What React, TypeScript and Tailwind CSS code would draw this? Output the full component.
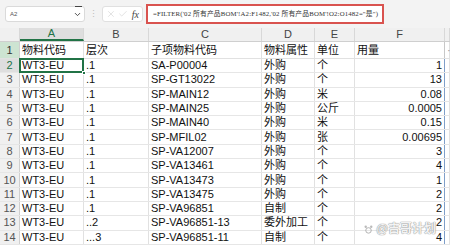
import { ChevronDown, X, Check } from 'lucide-react'

const cols = ['w-[20px]', 'w-[64px]', 'w-[65px]', 'w-[113px]', 'w-[53px]', 'w-[40px]', 'w-[90px]', 'w-[5px]']
const letters = ['', 'A', 'B', 'C', 'D', 'E', 'F', '']

const rows = [
  ['2', 'WT3-EU', '.1', 'SA-P00004', '外购', '个', '1'],
  ['3', 'WT3-EU', '.1', 'SP-GT13022', '外购', '个', '13'],
  ['4', 'WT3-EU', '.1', 'SP-MAIN12', '外购', '米', '0.08'],
  ['5', 'WT3-EU', '.1', 'SP-MAIN25', '外购', '公斤', '0.0005'],
  ['6', 'WT3-EU', '.1', 'SP-MAIN40', '外购', '米', '0.15'],
  ['7', 'WT3-EU', '.1', 'SP-MFIL02', '外购', '张', '0.00695'],
  ['8', 'WT3-EU', '.1', 'SP-VA12007', '外购', '个', '3'],
  ['9', 'WT3-EU', '.1', 'SP-VA13461', '外购', '个', '4'],
  ['10', 'WT3-EU', '.1', 'SP-VA13473', '外购', '个', '1'],
  ['11', 'WT3-EU', '.1', 'SP-VA13475', '外购', '个', '2'],
  ['12', 'WT3-EU', '.1', 'SP-VA96851', '自制', '个', '2'],
  ['13', 'WT3-EU', '..2', 'SP-VA96851-13', '委外加工', '个', '2'],
  ['14', 'WT3-EU', '...3', 'SP-VA96851-11', '自制', '个', '4'],
]

function Toolbar() {
  return (
    <div className="flex h-[28px] items-center bg-[#f3f3f3] pl-[5px]">
      <div className="relative flex h-[16px] w-[80px] items-center justify-between rounded-[3px] border border-[#dadada] bg-white pl-[4px] pr-[2px] text-[6px] text-[#555]">
        <span>A2</span>
        <ChevronDown size={9} strokeWidth={2.5} className="text-[#444]" />
        <div className="absolute right-[2px] top-[-1px] h-[1px] w-[7px] bg-[#444]" />
      </div>
      <span className="mx-[4px] text-[9px] leading-none text-[#bbb]">⋮</span>
      <div className="flex h-[16px] w-[41px] items-center gap-[2px] rounded-[3px] border border-[#e0e0e0] bg-white px-[3px] text-[#c4c4c4]">
        <X size={10} strokeWidth={1.2} />
        <Check size={10} strokeWidth={1.2} />
        <span className="ml-[2px] text-[10px] italic text-[#444] [font-family:'Liberation_Serif',serif]">fx</span>
      </div>
      <div className="ml-[3px] flex h-[20px] w-[238px] items-center overflow-hidden whitespace-nowrap border-2 border-[#d9534f] bg-white pl-[5px] text-[6.8px] tracking-[0.15px] text-[#333] [font-family:'Liberation_Serif','Noto_Sans_CJK_SC',serif]">
        =FILTER('02 所有产品BOM'!A2:F1482,'02 所有产品BOM'!O2:O1482="是")
      </div>
    </div>
  )
}

function HeaderRow() {
  return (
    <div className="flex h-[14px] border-b border-[#cfcfcf] bg-[#f0f0f0] text-[11px] text-[#444]">
      {letters.map((l, i) => (
        <div
          key={i}
          className={`${cols[i]} flex shrink-0 items-center justify-center border-r border-[#d8d8d8] leading-none ${
            i === 1 ? 'border-b-2 border-b-[#217346] bg-[#dedede] text-[#217346]' : ''
          }`}
        >
          {l}
        </div>
      ))}
    </div>
  )
}

function Cell({ w, children, right, extra = '' }: { w: string; children?: React.ReactNode; right?: boolean; extra?: string }) {
  return (
    <div
      className={`${w} flex shrink-0 items-center whitespace-nowrap border-r border-[#e1e1e1] px-[2px] leading-none ${
        right ? 'justify-end' : ''
      } ${extra}`}
    >
      {children}
    </div>
  )
}

export default function App() {
  return (
    <div className="relative h-[245px] w-[450px] overflow-hidden bg-white text-[11px] text-[#111] [font-family:'Liberation_Sans','Noto_Sans_CJK_SC',sans-serif]">
      <Toolbar />
      <HeaderRow />

      {/* row 1: field names */}
      <div className="flex h-[17px] border-b border-[#e1e1e1]">
        <div className="flex w-[20px] shrink-0 items-center justify-center border-r border-[#cfcfcf] bg-[#cde4d2] text-[#333]">1</div>
        <Cell w={cols[1]}>物料代码</Cell>
        <Cell w={cols[2]}>层次</Cell>
        <Cell w={cols[3]}>子项物料代码</Cell>
        <Cell w={cols[4]}>物料属性</Cell>
        <Cell w={cols[5]}>单位</Cell>
        <Cell w={cols[6]} extra="border-r-[#c8c8c8]">用量</Cell>
        <Cell w={cols[7]}>
          <span className="text-[#999]">·</span>
        </Cell>
      </div>

      {rows.map((r, idx) => (
        <div key={r[0]} className="flex h-[14.3px] border-b border-[#e6e6e6]">
          <div
            className={`flex w-[20px] shrink-0 items-center justify-center border-r border-[#cfcfcf] leading-none ${
              idx === 0 ? 'bg-[#dedede] text-[#217346]' : 'bg-[#f0f0f0] text-[#555]'
            }`}
          >
            {r[0]}
          </div>
          <Cell w={cols[1]} extra={idx === 0 ? 'relative' : ''}>
            {r[1]}
            {idx === 0 && (
              <>
                <div className="absolute inset-[-1px] border-2 border-[#217346]" />
                <div className="absolute bottom-[-3px] right-[-3px] h-[4px] w-[4px] border border-white bg-[#217346]" />
              </>
            )}
          </Cell>
          <Cell w={cols[2]}>{r[2]}</Cell>
          <Cell w={cols[3]}>{r[3]}</Cell>
          <Cell w={cols[4]}>{r[4]}</Cell>
          <Cell w={cols[5]}>{r[5]}</Cell>
          <Cell w={cols[6]} right extra="border-r-[#7f9fc9]">
            {r[6]}
          </Cell>
          <Cell w={cols[7]} />
        </div>
      ))}

      {/* watermark */}
      <div className="absolute bottom-[7px] right-[14px] flex items-center gap-[2px] text-[12px] font-bold text-white/90 [text-shadow:0_0_1px_#888,0_0_1px_#888]">
        <svg width="11" height="11" viewBox="0 0 12 12" className="opacity-80">
          <circle cx="6" cy="7" r="3" fill="none" stroke="#999" strokeWidth="1" />
          <circle cx="3" cy="3" r="1.3" fill="#aaa" />
          <circle cx="9" cy="3" r="1.3" fill="#aaa" />
        </svg>
        <span>@吉哥计划</span>
      </div>
    </div>
  )
}
